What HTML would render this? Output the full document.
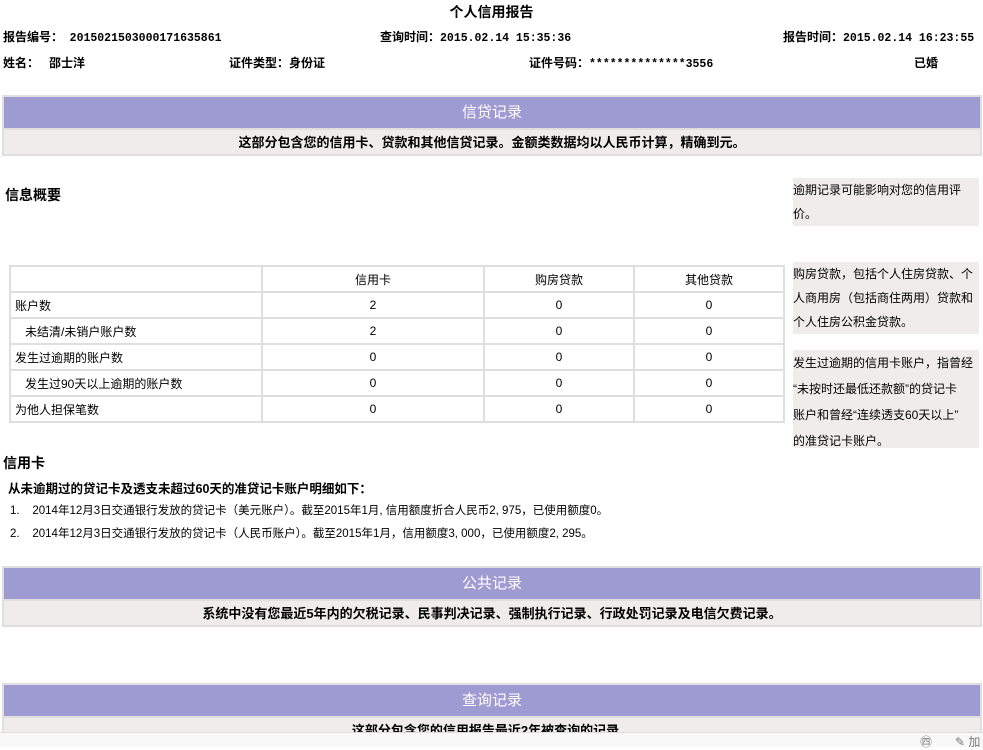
<!DOCTYPE html>
<html><head><meta charset="utf-8"><style>
*{margin:0;padding:0;box-sizing:border-box}
body{width:983px;height:747px;overflow:hidden;background:#fff;font-family:"Liberation Sans","Noto Sans CJK SC","WenQuanYi Zen Hei",sans-serif;font-size:12px;color:#000;position:relative}
.a{position:absolute;white-space:nowrap}
.b{font-weight:bold}
.m{font-family:"Liberation Mono",monospace;font-size:11.5px;font-weight:bold}
.sec{position:absolute;left:2px;width:980px;border:2px solid #e0dede;background:#f0ecec}
.sec .h{background:#9e9ad2;color:#fff;font-size:15px;text-align:center;height:31px;line-height:31px}
.sec .s{height:26px;line-height:26px;text-align:center;font-weight:bold;font-size:13px;border-top:2px solid #e0dede}
table{position:absolute;left:9px;top:265px;border-collapse:collapse;border:2px solid #e0dede}
td{border:2px solid #e0dede;height:26px;font-size:12px;padding:0 4px}
td.c{text-align:center}
.side{position:absolute;left:793px;width:186px;background:#f0ecec;font-size:12px;line-height:26px;padding-left:0}
</style></head><body>
<div class="a b" style="left:0;width:983px;text-align:center;top:2px;font-size:14px">个人信用报告</div>
<div class="a b" style="left:3px;top:28px">报告编号：&nbsp;&nbsp;<span class="m">2015021503000171635861</span></div>
<div class="a b" style="left:380px;top:28px">查询时间：<span class="m">2015.02.14 15:35:36</span></div>
<div class="a b" style="left:783px;top:28px">报告时间：<span class="m">2015.02.14 16:23:55</span></div>
<div class="a b" style="left:3px;top:54px">姓名：&nbsp;&nbsp;&nbsp;邵士洋</div>
<div class="a b" style="left:229px;top:54px">证件类型：身份证</div>
<div class="a b" style="left:529px;top:54px">证件号码：<span class="m">**************3556</span></div>
<div class="a b" style="left:914px;top:54px">已婚</div>

<div class="sec" style="top:95px"><div class="h">信贷记录</div><div class="s">这部分包含您的信用卡、贷款和其他信贷记录。金额类数据均以人民币计算，精确到元。</div></div>

<div class="a b" style="left:5px;top:185px;font-size:14px">信息概要</div>

<div class="side" style="top:178px;height:48px;line-height:24px">逾期记录可能影响对您的信用评<br>价。</div>
<div class="side" style="top:262px;height:72px;line-height:24px;padding-top:0">购房贷款，包括个人住房贷款、个<br>人商用房（包括商住两用）贷款和<br>个人住房公积金贷款。</div>
<div class="side" style="top:350px;height:98px;line-height:26px">发生过逾期的信用卡账户，指曾经<br>“未按时还最低还款额”的贷记卡<br>账户和曾经“连续透支60天以上”<br>的准贷记卡账户。</div>

<table>
<tr><td style="width:252px"></td><td class="c" style="width:222px">信用卡</td><td class="c" style="width:150px">购房贷款</td><td class="c" style="width:150px">其他贷款</td></tr>
<tr><td>账户数</td><td class="c">2</td><td class="c">0</td><td class="c">0</td></tr>
<tr><td>&nbsp;&nbsp;&nbsp;未结清/未销户账户数</td><td class="c">2</td><td class="c">0</td><td class="c">0</td></tr>
<tr><td>发生过逾期的账户数</td><td class="c">0</td><td class="c">0</td><td class="c">0</td></tr>
<tr><td>&nbsp;&nbsp;&nbsp;发生过90天以上逾期的账户数</td><td class="c">0</td><td class="c">0</td><td class="c">0</td></tr>
<tr><td>为他人担保笔数</td><td class="c">0</td><td class="c">0</td><td class="c">0</td></tr>
</table>

<div class="a b" style="left:3px;top:453px;font-size:14px">信用卡</div>
<div class="a b" style="left:8px;top:478px;font-size:12.5px">从未逾期过的贷记卡及透支未超过60天的准贷记卡账户明细如下：</div>
<div class="a" style="left:10px;top:502px;font-size:11.5px">1.&nbsp;&nbsp;&nbsp;&nbsp;2014年12月3日交通银行发放的贷记卡（美元账户）。截至2015年1月, 信用额度折合人民币2, 975，已使用额度0。</div>
<div class="a" style="left:10px;top:525px;font-size:11.5px">2.&nbsp;&nbsp;&nbsp;&nbsp;2014年12月3日交通银行发放的贷记卡（人民币账户）。截至2015年1月，信用额度3, 000，已使用额度2, 295。</div>

<div class="sec" style="top:566px"><div class="h">公共记录</div><div class="s">系统中没有您最近5年内的欠税记录、民事判决记录、强制执行记录、行政处罚记录及电信欠费记录。</div></div>

<div class="sec" style="top:683px"><div class="h">查询记录</div><div class="s">这部分包含您的信用报告最近2年被查询的记录。</div></div>

<div class="a" style="left:0;top:732px;width:983px;height:15px;background:#f8f8f8;border-top:1px solid #ddd"></div>
<div class="a" style="left:920px;top:733px;font-size:12px;color:#777">㊃</div>
<div class="a" style="left:955px;top:733px;font-size:12px;color:#777">✎ 加</div>
</body></html>
